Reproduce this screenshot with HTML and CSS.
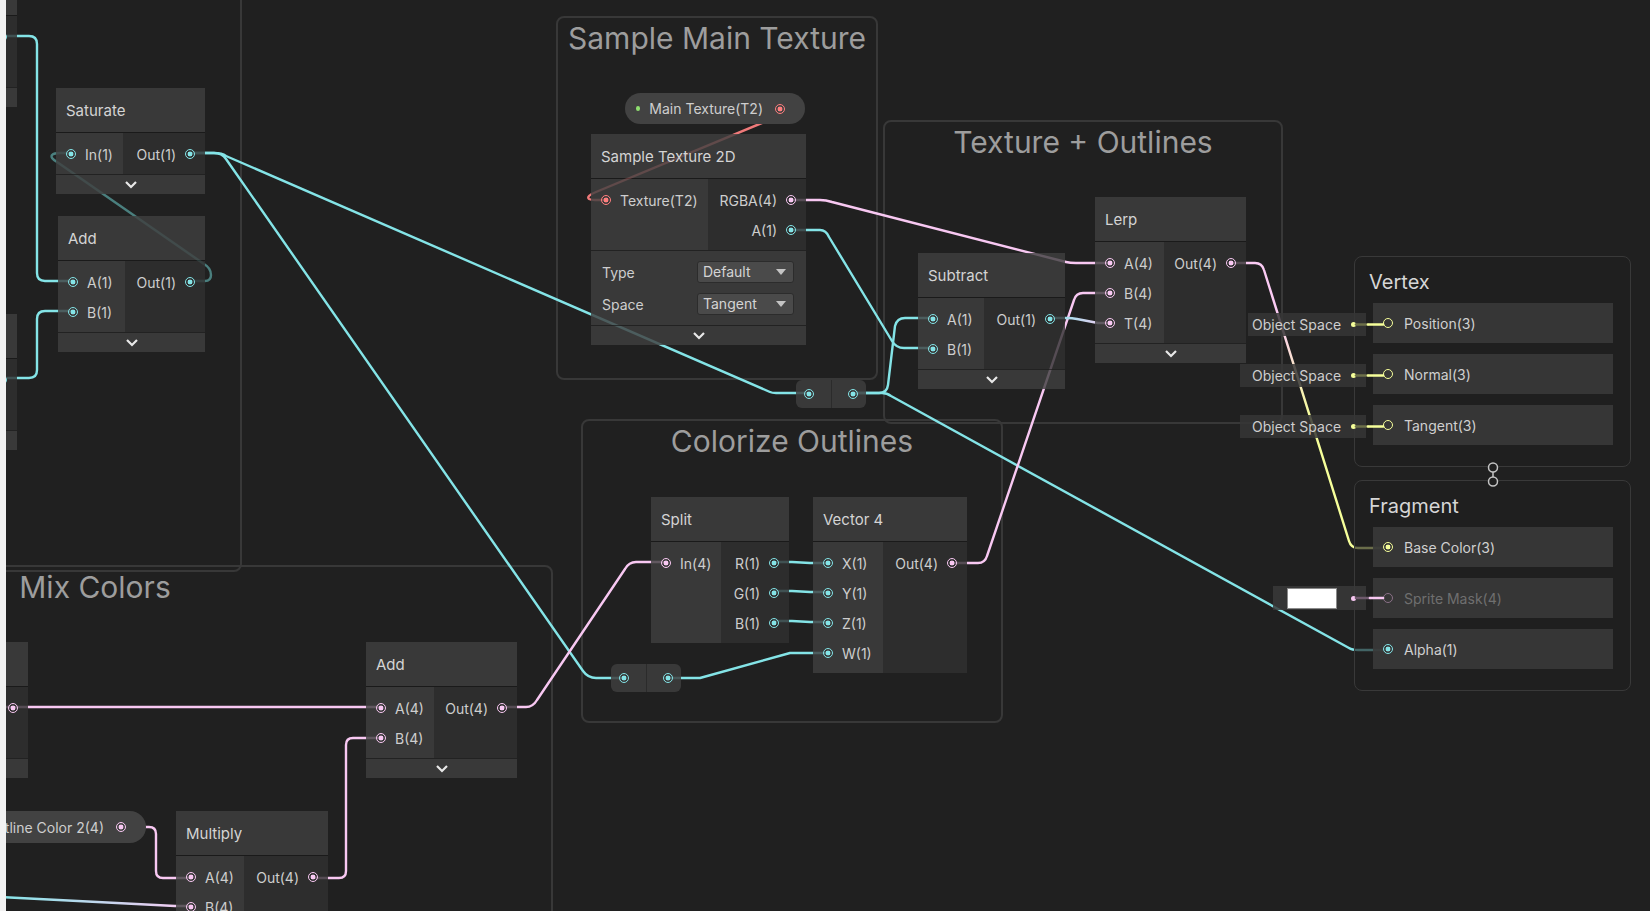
FILE: index.html
```html
<!DOCTYPE html>
<html lang="en">

<head>
    <meta charset="UTF-8">
    <title>Shader Graph</title>
    <link rel="stylesheet" href="styles.css">
</head>

<body>
    <div class="graph">
        <!-- groups -->
        <div class="group g-left"></div>
        <div class="group g-mix"><div class="group-title">Mix Colors</div></div>
        <div class="group g-sample"><div class="group-title">Sample Main Texture</div></div>
        <div class="group g-texture"><div class="group-title">Texture + Outlines</div></div>
        <div class="group g-colorize"><div class="group-title">Colorize Outlines</div></div>

        <!-- edges, drawn under the nodes -->
        <svg class="wires" width="1650" height="911" viewBox="0 0 1650 911">
            <defs>
                <linearGradient id="gSubT" gradientUnits="userSpaceOnUse" x1="1050" y1="0" x2="1110" y2="0">
                    <stop offset="0" stop-color="#84e4e7" />
                    <stop offset="1" stop-color="#fbcbf4" />
                </linearGradient>
                <linearGradient id="gBase" gradientUnits="userSpaceOnUse" x1="0" y1="320" x2="0" y2="420">
                    <stop offset="0" stop-color="#fbcbf4" />
                    <stop offset="1" stop-color="#f6ff9a" />
                </linearGradient>
                <linearGradient id="gMulB" gradientUnits="userSpaceOnUse" x1="0" y1="0" x2="191" y2="0">
                    <stop offset="0" stop-color="#84e4e7" />
                    <stop offset="1" stop-color="#fbcbf4" />
                </linearGradient>
            </defs>
            <g class="cyan-w">
                <path d="M0,36 H29 Q37,36 37,44 V273 Q37,281 45,281 H73" />
                <path d="M0,378 H29 Q37,378 37,370 V319 Q37,311 45,311 H73" />
                <path d="M190,153 H214 Q222,153 226,156 L770,392 Q772,393 776,393 H808" />
                <path d="M190,153 H214 Q222,153 226,159 L583,671 Q588,678 596,678 H623" />
                <path d="M854,393 H879 Q887,393 888,385 L895,326 Q897,318 905,318 H933" />
                <path d="M854,393 H882 Q887,393 891,396 L1349,648 Q1352,650 1358,650 H1388" />
                <path d="M791,230 H820 Q826,230 829,237 L892,341 Q896,348 904,348 H933" />
                <path d="M774,562 H792 L810,563 H828" />
                <path d="M774,591 H792 L810,592 H828" />
                <path d="M774,621 H792 L810,622 H828" />
                <path d="M669,678 H700 L790,653 H828" />
            </g>
            <path class="loop-w" d="M190,281 H205 Q211,281 211,275 Q211,268 204,264 L57,162 Q50,158 52,155 Q54,153 60,153 H71" />
            <g class="pink-w">
                <path d="M791,200 H820 Q826,200 832,202 L1066,262 Q1070,263 1076,263 H1110" />
                <path d="M952,563 H978 Q985,563 987,556 L1074,300 Q1076,293 1083,293 H1110" />
                <path d="M502,707 H526 Q533,707 537,700 L625,569 Q629,562 636,562 H666" />
                <path d="M0,707 H381" />
                <path d="M121,827 H149 Q156,827 156,834 V871 Q156,878 163,878 H191" />
                <path d="M312,878 H339 Q346,878 346,871 V745 Q346,738 353,738 H381" />
            </g>
            <path class="wire" stroke="url(#gSubT)" d="M1050,318 H1067 Q1072,318 1077,319 L1098,323 H1110" />
            <path class="wire" stroke="url(#gBase)" d="M1232,263 H1255 Q1262,263 1264,270 L1349,541 Q1351,548 1358,548 H1388" />
            <path class="wire" stroke="url(#gMulB)" d="M0,897 L175,906 H191" />
            <path class="red-w" d="M780,108 H798 L596,192 Q586,196 589,199 Q591,200 595,200 H605" />
        </svg>

        <!-- nodes cut by the left edge -->
        <div class="node n-edge1">
            <div class="node-title"></div>
            <div class="node-ports">
                <div class="inputs"></div>
                <div class="outputs"><div class="port"><i class="dot cyan"></i></div><div class="port"></div></div>
            </div>
            <div class="node-foot"></div>
        </div>
        <div class="node n-edge2">
            <div class="node-title"></div>
            <div class="node-ports">
                <div class="inputs"></div>
                <div class="outputs"><div class="port"><i class="dot cyan"></i></div><div class="port"></div></div>
            </div>
            <div class="node-foot"></div>
        </div>
        <div class="node n-edge3">
            <div class="node-title"></div>
            <div class="node-ports">
                <div class="inputs"></div>
                <div class="outputs"><div class="port"><i class="dot pink"></i></div><div class="port"></div></div>
            </div>
            <div class="node-foot"></div>
        </div>

        <div class="node n-saturate">
            <div class="node-title">Saturate</div>
            <div class="node-ports">
                <div class="inputs"><div class="port"><i class="dot cyan"></i>In(1)</div></div>
                <div class="outputs"><div class="port">Out(1)<i class="dot cyan"></i></div></div>
            </div>
            <div class="node-foot"><svg class="chev" viewBox="0 0 14 9"><path d="M2 2l5 5 5-5" /></svg></div>
        </div>

        <div class="node n-add1">
            <div class="node-title">Add</div>
            <div class="node-ports">
                <div class="inputs">
                    <div class="port"><i class="dot cyan"></i>A(1)</div>
                    <div class="port"><i class="dot cyan"></i>B(1)</div>
                </div>
                <div class="outputs"><div class="port">Out(1)<i class="dot cyan"></i></div></div>
            </div>
            <div class="node-foot"><svg class="chev" viewBox="0 0 14 9"><path d="M2 2l5 5 5-5" /></svg></div>
        </div>

        <div class="pill p-main">
            <i class="prop-dot"></i><span>Main Texture(T2)</span><i class="dot red"></i>
        </div>

        <div class="node n-sample">
            <div class="node-title">Sample Texture 2D</div>
            <div class="node-ports">
                <div class="inputs"><div class="port"><i class="dot red"></i>Texture(T2)</div></div>
                <div class="outputs">
                    <div class="port">RGBA(4)<i class="dot pink"></i></div>
                    <div class="port">A(1)<i class="dot cyan"></i></div>
                </div>
            </div>
            <div class="node-controls">
                <div class="control"><span>Type</span><div class="dropdown">Default</div></div>
                <div class="control"><span>Space</span><div class="dropdown">Tangent</div></div>
            </div>
            <div class="node-foot"><svg class="chev" viewBox="0 0 14 9"><path d="M2 2l5 5 5-5" /></svg></div>
        </div>

        <div class="relay r-one"><span><i class="dot cyan"></i></span><span><i class="dot cyan"></i></span></div>

        <div class="node n-subtract">
            <div class="node-title">Subtract</div>
            <div class="node-ports">
                <div class="inputs">
                    <div class="port"><i class="dot cyan"></i>A(1)</div>
                    <div class="port"><i class="dot cyan"></i>B(1)</div>
                </div>
                <div class="outputs"><div class="port">Out(1)<i class="dot cyan"></i></div></div>
            </div>
            <div class="node-foot"><svg class="chev" viewBox="0 0 14 9"><path d="M2 2l5 5 5-5" /></svg></div>
        </div>

        <div class="node n-lerp">
            <div class="node-title">Lerp</div>
            <div class="node-ports">
                <div class="inputs">
                    <div class="port"><i class="dot pink"></i>A(4)</div>
                    <div class="port"><i class="dot pink"></i>B(4)</div>
                    <div class="port"><i class="dot pink"></i>T(4)</div>
                </div>
                <div class="outputs"><div class="port">Out(4)<i class="dot pink"></i></div></div>
            </div>
            <div class="node-foot"><svg class="chev" viewBox="0 0 14 9"><path d="M2 2l5 5 5-5" /></svg></div>
        </div>

        <div class="node n-split">
            <div class="node-title">Split</div>
            <div class="node-ports">
                <div class="inputs"><div class="port"><i class="dot pink"></i>In(4)</div></div>
                <div class="outputs">
                    <div class="port">R(1)<i class="dot cyan"></i></div>
                    <div class="port">G(1)<i class="dot cyan"></i></div>
                    <div class="port">B(1)<i class="dot cyan"></i></div>
                </div>
            </div>
        </div>

        <div class="node n-vector">
            <div class="node-title">Vector 4</div>
            <div class="node-ports">
                <div class="inputs">
                    <div class="port"><i class="dot cyan"></i>X(1)</div>
                    <div class="port"><i class="dot cyan"></i>Y(1)</div>
                    <div class="port"><i class="dot cyan"></i>Z(1)</div>
                    <div class="port"><i class="dot cyan"></i>W(1)</div>
                </div>
                <div class="outputs"><div class="port">Out(4)<i class="dot pink"></i></div></div>
            </div>
        </div>

        <div class="relay r-two"><span><i class="dot cyan"></i></span><span><i class="dot cyan"></i></span></div>

        <div class="node n-add2">
            <div class="node-title">Add</div>
            <div class="node-ports">
                <div class="inputs">
                    <div class="port"><i class="dot pink"></i>A(4)</div>
                    <div class="port"><i class="dot pink"></i>B(4)</div>
                </div>
                <div class="outputs"><div class="port">Out(4)<i class="dot pink"></i></div></div>
            </div>
            <div class="node-foot"><svg class="chev" viewBox="0 0 14 9"><path d="M2 2l5 5 5-5" /></svg></div>
        </div>

        <div class="pill p-outline">
            <i class="prop-dot"></i><span>Outline Color 2(4)</span><i class="dot pink"></i>
        </div>

        <div class="node n-multiply">
            <div class="node-title">Multiply</div>
            <div class="node-ports">
                <div class="inputs">
                    <div class="port"><i class="dot pink"></i>A(4)</div>
                    <div class="port"><i class="dot pink"></i>B(4)</div>
                </div>
                <div class="outputs"><div class="port">Out(4)<i class="dot pink"></i></div></div>
            </div>
            <div class="node-foot"><svg class="chev" viewBox="0 0 14 9"><path d="M2 2l5 5 5-5" /></svg></div>
        </div>

        <!-- master stack -->
        <div class="context ctx-vertex">
            <div class="context-title">Vertex</div>
            <div class="block-row"><i class="dot yellow hollow"></i>Position(3)</div>
            <div class="block-row"><i class="dot yellow hollow"></i>Normal(3)</div>
            <div class="block-row"><i class="dot yellow hollow"></i>Tangent(3)</div>
        </div>
        <div class="context ctx-fragment">
            <div class="context-title">Fragment</div>
            <div class="block-row"><i class="dot yellow"></i>Base Color(3)</div>
            <div class="block-row off"><i class="dot mask hollow"></i>Sprite Mask(4)</div>
            <div class="block-row"><i class="dot cyan"></i>Alpha(1)</div>
        </div>

        <div class="field f-pos">Object Space<i class="mini"></i></div>
        <div class="field f-nrm">Object Space<i class="mini"></i></div>
        <div class="field f-tan">Object Space<i class="mini"></i></div>
        <div class="field f-mask"><span class="swatch"></span><i class="mini pink-mini"></i></div>

        <svg class="overlay" width="1650" height="911" viewBox="0 0 1650 911">
            <g class="stub-y">
                <path class="dim" d="M1356,324.5 H1368" />
                <path d="M1368,324.5 H1383" />
                <path class="dim" d="M1356,375.5 H1368" />
                <path d="M1368,375.5 H1383" />
                <path class="dim" d="M1356,426.5 H1368" />
                <path d="M1368,426.5 H1383" />
            </g>
            <g class="stub-p">
                <path class="dim" d="M1356,598 H1370" />
                <path d="M1370,598 H1383" />
            </g>
            <g class="link">
                <path d="M1493,472 V477" />
                <circle cx="1493" cy="467.5" r="4.5" />
                <circle cx="1493" cy="481.5" r="4.5" />
            </g>
        </svg>

        <div class="edge-strip"></div>
    </div>
</body>

</html>
```

FILE: styles.css
```css
* {
    margin: 0;
    padding: 0;
    box-sizing: border-box;
}

body {
    background: #202020;
    font-family: Inter, "Noto Sans", sans-serif;
    overflow: hidden;
}

.graph {
    position: relative;
    width: 1650px;
    height: 911px;
    overflow: hidden;
    background: #202020;
}

/* groups */

.group {
    position: absolute;
    border: 2px solid #383838;
    border-radius: 8px;
}

.group-title {
    padding-top: 2px;
    line-height: 36px;
    font-size: 30px;
    color: #9d9d9d;
    text-align: center;
    white-space: nowrap;
}

.g-left { left: -300px; top: -50px; width: 542px; height: 622px; }
.g-mix { left: -363px; top: 565px; width: 916px; height: 500px; }
.g-sample { left: 556px; top: 16px; width: 322px; height: 364px; }
.g-texture { left: 883px; top: 120px; width: 400px; height: 304px; }
.g-colorize { left: 581px; top: 419px; width: 422px; height: 304px; }

/* edges */

.wires,
.overlay {
    position: absolute;
    left: 0;
    top: 0;
    fill: none;
    stroke-width: 2.4;
    stroke-linecap: round;
    stroke-linejoin: round;
}

.overlay {
    z-index: 5;
}

.cyan-w path { stroke: #84e4e7; }
.pink-w path { stroke: #f8c8f2; }
.loop-w { stroke: #4a7f7e; }
.red-w { stroke: #f07a7a; }

.stub-y path { stroke: #f6ff9a; stroke-width: 2.6; }
.stub-y .dim { stroke: #6c6f49; }
.stub-p path { stroke: #f8c8f2; stroke-width: 2.6; }
.stub-p .dim { stroke: #6e5a6c; }

.link circle,
.link path {
    stroke: #c4c4c4;
    stroke-width: 1.5;
}

.link circle { fill: #202020; }

/* nodes */

.node {
    position: absolute;
    z-index: 2;
    display: flex;
    flex-direction: column;
    color: #cecece;
    font-size: 14px;
    white-space: nowrap;
}

.node-title {
    height: 44px;
    display: flex;
    align-items: center;
    padding-left: 10px;
    font-size: 15px;
    color: #d4d4d4;
    background: rgba(64, 64, 64, 0.82);
}

.node-ports {
    display: flex;
    border-top: 1px solid rgba(24, 24, 24, 0.7);
}

.inputs {
    width: var(--in);
    padding: 6px 0 5px;
    background: rgba(64, 64, 64, 0.82);
}

.outputs {
    flex: 1;
    padding: 6px 0 5px;
    background: rgba(49, 49, 49, 0.82);
}

.port {
    height: 30px;
    display: flex;
    align-items: center;
    gap: 9px;
}

.inputs .port { padding-left: 10px; }

.outputs .port {
    justify-content: flex-end;
    padding-right: 10px;
}

.node-foot {
    height: 20px;
    display: flex;
    justify-content: center;
    align-items: center;
    border-top: 1px solid rgba(24, 24, 24, 0.7);
    background: rgba(64, 64, 64, 0.82);
}

.chev {
    width: 14px;
    height: 9px;
    fill: none;
    stroke: #e8e8e8;
    stroke-width: 2.2;
}

.node-controls {
    padding: 5px 12px 5px 11px;
    border-top: 1px solid rgba(24, 24, 24, 0.7);
    background: rgba(64, 64, 64, 0.82);
}

.control {
    height: 32px;
    display: flex;
    justify-content: space-between;
    align-items: center;
}

.dropdown {
    position: relative;
    width: 97px;
    height: 22px;
    padding-left: 5px;
    line-height: 20px;
    color: #d4d4d4;
    background: #4a4a4a;
    border: 1px solid #2c2c2c;
    border-radius: 3px;
}

.dropdown::after {
    content: "";
    position: absolute;
    right: 7px;
    top: 7px;
    border-left: 5px solid transparent;
    border-right: 5px solid transparent;
    border-top: 6px solid #c4c4c4;
}

.n-edge1 { left: -120px; top: -29px; width: 137px; --in: 60px; }
.n-edge2 { left: -120px; top: 314px; width: 137px; --in: 60px; }
.n-edge3 { left: -120px; top: 642px; width: 148px; --in: 60px; }
.n-saturate { left: 56px; top: 88px; width: 149px; --in: 67px; }
.n-add1 { left: 58px; top: 216px; width: 147px; --in: 67px; }
.n-sample { left: 591px; top: 134px; width: 215px; --in: 117px; }
.n-subtract { left: 918px; top: 253px; width: 147px; --in: 66px; }
.n-lerp { left: 1095px; top: 197px; width: 151px; --in: 69px; }
.n-split { left: 651px; top: 497px; width: 138px; --in: 70px; }
.n-vector { left: 813px; top: 497px; width: 154px; --in: 70px; }
.n-add2 { left: 366px; top: 642px; width: 151px; --in: 68px; }
.n-multiply { left: 176px; top: 811px; width: 152px; --in: 68px; }

/* ports */

.dot {
    width: 10px;
    height: 10px;
    flex: none;
    border-radius: 50%;
    border: 1.5px solid var(--pc);
    background: radial-gradient(circle, var(--pc) 0 2.2px, transparent 2.7px);
}

.dot.hollow { background: none; }

.cyan { --pc: #84e4e7; }
.pink { --pc: #f8c8f2; }
.red { --pc: #ff7f7f; }
.yellow { --pc: #f6ff9a; }
.mask { --pc: #8a7087; }

/* property pills and relays */

.pill {
    position: absolute;
    z-index: 2;
    height: 31px;
    display: flex;
    align-items: center;
    padding: 0 20px 0 11px;
    border-radius: 16px;
    background: #424242;
    color: #cecece;
    font-size: 14px;
    white-space: nowrap;
}

.prop-dot {
    width: 5px;
    height: 5px;
    border-radius: 50%;
    background: #8fe070;
    margin-right: 9px;
}

.pill span { margin-right: 12px; }

.p-main { left: 625px; top: 93px; width: 180px; }
.p-main span { flex: 1; }
.p-outline { right: 1504px; top: 811px; height: 32px; }

.relay {
    position: absolute;
    z-index: 2;
    height: 28px;
    width: 70px;
    display: flex;
    border-radius: 6px;
    overflow: hidden;
}

.relay span {
    flex: 1;
    display: flex;
    align-items: center;
    padding: 0 8px;
    background: rgba(62, 62, 62, 0.85);
}

.relay span + span {
    justify-content: flex-end;
    border-left: 1px solid #2b2b2b;
}

.r-one { left: 796px; top: 380px; }
.r-two { left: 611px; top: 664px; }

/* master stack */

.context {
    position: absolute;
    z-index: 3;
    left: 1354px;
    width: 277px;
    padding: 0 17px 21px 18px;
    display: flex;
    flex-direction: column;
    gap: 11px;
    border: 1px solid #393939;
    border-radius: 8px;
    background: rgba(30, 30, 30, 0.65);
}

.ctx-vertex { top: 256px; }
.ctx-fragment { top: 480px; }

.context-title {
    height: 35px;
    padding-top: 14px;
    margin-left: -4px;
    line-height: 22px;
    font-size: 20px;
    color: #d6d6d6;
}

.block-row {
    height: 40px;
    display: flex;
    align-items: center;
    gap: 11px;
    padding-left: 10px;
    background: rgba(56, 56, 56, 0.9);
    color: #d0d0d0;
    font-size: 14px;
}

.block-row.off { color: #6f6f6f; }

.field {
    position: absolute;
    z-index: 4;
    height: 23px;
    display: flex;
    align-items: center;
    justify-content: space-between;
    padding-right: 10px;
    background: rgba(54, 54, 54, 0.85);
    color: #cecece;
    font-size: 14px;
    white-space: nowrap;
}

.f-pos { left: 1248px; top: 313px; width: 118px; padding-left: 4px; }
.f-nrm { left: 1240px; top: 364px; width: 126px; padding-left: 12px; }
.f-tan { left: 1240px; top: 415px; width: 126px; padding-left: 12px; }

.f-mask {
    left: 1273px;
    top: 586px;
    width: 93px;
    height: 24px;
    padding-left: 14px;
    background: rgba(58, 58, 58, 0.85);
}

.swatch {
    width: 50px;
    height: 21px;
    background: #ffffff;
    border: 1px solid #8a8a8a;
}

.mini {
    width: 5px;
    height: 5px;
    border-radius: 50%;
    background: #f6ff9a;
}

.mini.pink-mini { background: #f8c8f2; }

.edge-strip {
    position: absolute;
    z-index: 6;
    left: 0;
    top: 0;
    width: 6px;
    height: 911px;
    background: #f2f2f2;
}
```
